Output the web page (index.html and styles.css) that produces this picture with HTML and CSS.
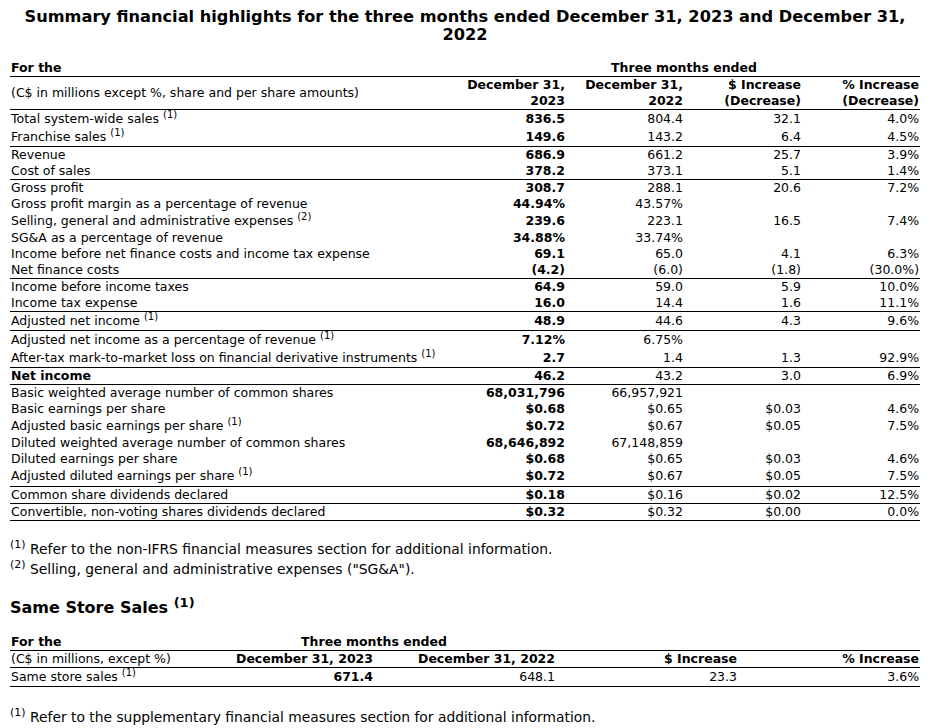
FILE: index.html
```html
<!DOCTYPE html>
<html lang="en">
<head>
<meta charset="utf-8">
<title>Summary financial highlights</title>
<link rel="stylesheet" href="styles.css">
</head>
<body>
<main class="page">
  <h1 class="title">Summary financial highlights for the three months ended December 31, 2023 and December 31,<br>2022</h1>

  <table class="fin">
    <colgroup>
      <col class="c-label"><col class="c-num"><col class="c-num"><col class="c-num"><col class="c-num">
    </colgroup>
    <thead>
      <tr class="rule">
        <th class="lbl">For the</th>
        <th colspan="4" class="ctr">Three months ended</th>
      </tr>
      <tr class="rule hd2">
        <td class="lbl">(C$ in millions except %, share and per share amounts)</td>
        <th>December 31,<br>2023</th>
        <th>December 31,<br>2022</th>
        <th>$ Increase<br>(Decrease)</th>
        <th>% Increase<br>(Decrease)</th>
      </tr>
    </thead>
    <tbody>
      <tr class="s"><td>Total system-wide sales <sup>(1)</sup></td><td>836.5</td><td>804.4</td><td>32.1</td><td>4.0%</td></tr>
      <tr class="s rule"><td>Franchise sales <sup>(1)</sup></td><td>149.6</td><td>143.2</td><td>6.4</td><td>4.5%</td></tr>
      <tr><td>Revenue</td><td>686.9</td><td>661.2</td><td>25.7</td><td>3.9%</td></tr>
      <tr class="rule"><td>Cost of sales</td><td>378.2</td><td>373.1</td><td>5.1</td><td>1.4%</td></tr>
      <tr><td>Gross profit</td><td>308.7</td><td>288.1</td><td>20.6</td><td>7.2%</td></tr>
      <tr><td>Gross profit margin as a percentage of revenue</td><td>44.94%</td><td>43.57%</td><td></td><td></td></tr>
      <tr class="s"><td>Selling, general and administrative expenses <sup>(2)</sup></td><td>239.6</td><td>223.1</td><td>16.5</td><td>7.4%</td></tr>
      <tr><td>SG&amp;A as a percentage of revenue</td><td>34.88%</td><td>33.74%</td><td></td><td></td></tr>
      <tr><td>Income before net finance costs and income tax expense</td><td>69.1</td><td>65.0</td><td>4.1</td><td>6.3%</td></tr>
      <tr class="rule"><td>Net finance costs</td><td>(4.2)</td><td>(6.0)</td><td>(1.8)</td><td>(30.0%)</td></tr>
      <tr><td>Income before income taxes</td><td>64.9</td><td>59.0</td><td>5.9</td><td>10.0%</td></tr>
      <tr class="rule"><td>Income tax expense</td><td>16.0</td><td>14.4</td><td>1.6</td><td>11.1%</td></tr>
      <tr class="s rule"><td>Adjusted net income <sup>(1)</sup></td><td>48.9</td><td>44.6</td><td>4.3</td><td>9.6%</td></tr>
      <tr class="s"><td>Adjusted net income as a percentage of revenue <sup>(1)</sup></td><td>7.12%</td><td>6.75%</td><td></td><td></td></tr>
      <tr class="s rule"><td>After-tax mark-to-market loss on financial derivative instruments <sup>(1)</sup></td><td>2.7</td><td>1.4</td><td>1.3</td><td>92.9%</td></tr>
      <tr class="rule"><td class="strong">Net income</td><td>46.2</td><td>43.2</td><td>3.0</td><td>6.9%</td></tr>
      <tr><td>Basic weighted average number of common shares</td><td>68,031,796</td><td>66,957,921</td><td></td><td></td></tr>
      <tr><td>Basic earnings per share</td><td>$0.68</td><td>$0.65</td><td>$0.03</td><td>4.6%</td></tr>
      <tr class="s"><td>Adjusted basic earnings per share <sup>(1)</sup></td><td>$0.72</td><td>$0.67</td><td>$0.05</td><td>7.5%</td></tr>
      <tr><td>Diluted weighted average number of common shares</td><td>68,646,892</td><td>67,148,859</td><td></td><td></td></tr>
      <tr><td>Diluted earnings per share</td><td>$0.68</td><td>$0.65</td><td>$0.03</td><td>4.6%</td></tr>
      <tr class="s rule"><td>Adjusted diluted earnings per share <sup>(1)</sup></td><td>$0.72</td><td>$0.67</td><td>$0.05</td><td>7.5%</td></tr>
      <tr class="rule"><td>Common share dividends declared</td><td>$0.18</td><td>$0.16</td><td>$0.02</td><td>12.5%</td></tr>
      <tr class="rule"><td>Convertible, non-voting shares dividends declared</td><td>$0.32</td><td>$0.32</td><td>$0.00</td><td>0.0%</td></tr>
    </tbody>
  </table>

  <div class="notes">
    <p><sup>(1)</sup> Refer to the non-IFRS financial measures section for additional information.</p>
    <p><sup>(2)</sup> Selling, general and administrative expenses ("SG&amp;A").</p>
  </div>

  <h2 class="section">Same Store Sales <sup>(1)</sup></h2>

  <table class="fin sss">
    <colgroup>
      <col class="c-5"><col class="c-5"><col class="c-5"><col class="c-5"><col class="c-5">
    </colgroup>
    <thead>
      <tr class="rule">
        <th class="lbl">For the</th>
        <th colspan="2" class="ctr">Three months ended</th>
        <th></th>
        <th></th>
      </tr>
      <tr class="rule">
        <td class="lbl">(C$ in millions, except %)</td>
        <th>December 31, 2023</th>
        <th>December 31, 2022</th>
        <th>$ Increase</th>
        <th>% Increase</th>
      </tr>
    </thead>
    <tbody>
      <tr class="s rule"><td>Same store sales <sup>(1)</sup></td><td>671.4</td><td>648.1</td><td>23.3</td><td>3.6%</td></tr>
    </tbody>
  </table>

  <div class="notes last">
    <p><sup>(1)</sup> Refer to the supplementary financial measures section for additional information.</p>
  </div>
</main>
</body>
</html>
```
FILE: styles.css
```css
* { box-sizing: border-box; }
html, body { margin: 0; padding: 0; background: #fff; }
body { font-family: "DejaVu Sans", Verdana, sans-serif; color: #000; }

.page { width: 933px; padding: 8px 13px 0 10px; }

.title {
  margin: 0;
  font-size: 16.2px;
  line-height: 17.5px;
  font-weight: bold;
  text-align: center;
  white-space: nowrap;
}

.fin {
  margin-top: 17px;
  width: 910px;
  border-collapse: collapse;
  table-layout: fixed;
  font-size: 12.5px;
}
.c-label { width: 438px; }
.c-num { width: 118px; }
.c-5 { width: 182px; }

.fin th, .fin td {
  padding: 0 1px;
  height: 16px;
  line-height: 16px;
  text-align: right;
  vertical-align: middle;
  white-space: nowrap;
  font-weight: normal;
}
.fin th { font-weight: bold; }
.fin .lbl, .fin tbody td:first-child { text-align: left; }
.fin th.lbl { font-weight: bold; }
.fin th.ctr { text-align: center; }
.fin tbody td:nth-child(2) { font-weight: bold; }
.fin td.strong { font-weight: bold; }
.fin .s td { height: 18px; }
.fin .s.rule td { height: 19px; }
.fin .rule td, .fin .rule th { border-bottom: 1px solid #000; }

.fin sup {
  font-size: 10px;
  line-height: 0;
  vertical-align: 5px;
}

.notes { margin-top: 18px; font-size: 13.85px; line-height: 20px; }
.notes p { margin: 0; }
.notes sup { font-size: 11px; line-height: 0; vertical-align: 6px; }

.section {
  margin: 19px 0 0;
  font-size: 16px;
  line-height: 20px;
  font-weight: bold;
}
.section sup { font-size: 13px; line-height: 0; vertical-align: 6px; }

.sss { margin-top: 16px; }
.notes.last { margin-top: 20px; }
```
